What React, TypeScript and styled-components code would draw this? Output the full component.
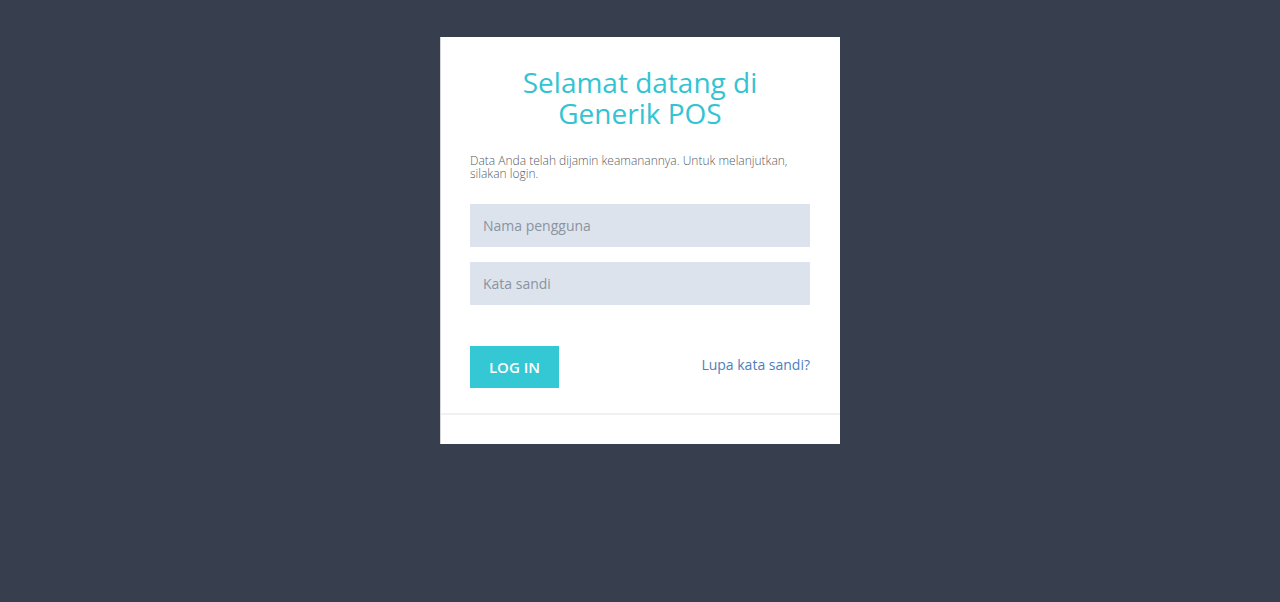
import styled, { createGlobalStyle } from "styled-components";

const Global = createGlobalStyle`
  html, body {
    margin: 0;
    padding: 0;
    background: #373f4f;
    font-family: "Open Sans", "Liberation Sans", sans-serif;
  }
  * { box-sizing: border-box; }
`;

const Page = styled.div`
  min-height: 602px;
  display: flex;
  justify-content: center;
  align-items: flex-start;
  padding-top: 37px;
`;

const Card = styled.div`
  width: 400px;
  background: #ffffff;
  border-left: 1px solid #d4d6da;
`;

const Body = styled.form`
  padding: 30px 30px 25px 29px;
`;

const Title = styled.h1`
  margin: 0;
  text-align: center;
  font-weight: 400;
  font-size: 28px;
  line-height: 31px;
  color: #34c3d2;
`;

const TitleLine = styled.span`
  display: block;
`;

const Lead = styled.p`
  margin: 25px 0 24px;
  font-size: 12px;
  font-weight: 300;
  line-height: 13px;
  color: #555b63;
`;

const Field = styled.input`
  display: block;
  width: 100%;
  height: 43px;
  border: 0;
  outline: none;
  background: #dce3ed;
  padding: 0 13px;
  font-family: inherit;
  font-size: 14px;
  color: #333;
  & + & { margin-top: 15px; }
  &::placeholder { color: #8b939f; }
`;

const Actions = styled.div`
  display: flex;
  justify-content: space-between;
  align-items: center;
  margin-top: 41px;
`;

const Button = styled.button`
  height: 42px;
  width: 89px;
  border: 0;
  background: #34c7d4;
  color: #ffffff;
  font-family: inherit;
  font-weight: 600;
  font-size: 15px;
  cursor: pointer;
  padding: 0;
`;

const Forgot = styled.a`
  font-size: 14px;
  color: #4d80bd;
  text-decoration: none;
  margin-top: -6px;
`;

const Footer = styled.div`
  height: 31px;
  border-top: 2px solid #f0f0f0;
`;

export default function App() {
  return (
    <>
      <Global />
      <Page>
        <Card>
          <Body onSubmit={(e) => e.preventDefault()}>
            <Title>
              <TitleLine>Selamat datang di</TitleLine>
              <TitleLine>Generik POS</TitleLine>
            </Title>
            <Lead>
              Data Anda telah dijamin keamanannya. Untuk melanjutkan, silakan
              login.
            </Lead>
            <Field placeholder="Nama pengguna" />
            <Field type="password" placeholder="Kata sandi" />
            <Actions>
              <Button type="submit">LOG IN</Button>
              <Forgot href="#">Lupa kata sandi?</Forgot>
            </Actions>
          </Body>
          <Footer />
        </Card>
      </Page>
    </>
  );
}
